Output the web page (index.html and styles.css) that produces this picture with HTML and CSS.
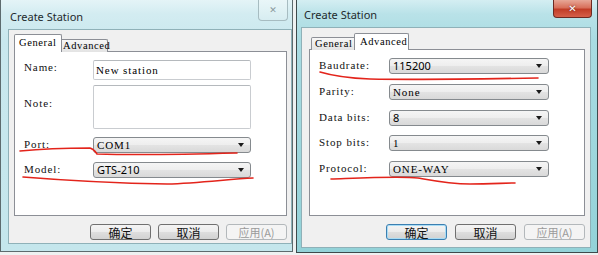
FILE: index.html
```html
<!DOCTYPE html>
<html lang="zh-CN">
<head>
    <meta charset="UTF-8">
    <title>Create Station</title>
    <link rel="stylesheet" href="styles.css">
</head>
<body>
    <div class="screen">
        <div class="dlg dlg-left">
            <div class="titlebar">
                <span class="title">Create Station</span>
                <span class="close">&#x2715;</span>
            </div>
            <div class="client">
                <div class="tabs">
                    <span class="tab on">General</span>
                    <span class="tab">Advanced</span>
                </div>
                <div class="panel">
                    <div class="row r-name">
                        <span class="lbl">Name:</span>
                        <span class="edit mono">New station</span>
                    </div>
                    <div class="row r-note">
                        <span class="lbl note-lbl">Note:</span>
                        <span class="edit memo"></span>
                    </div>
                    <div class="row r-port">
                        <span class="lbl">Port:</span>
                        <span class="combo mono">COM1</span>
                    </div>
                    <div class="row r-model">
                        <span class="lbl">Model:</span>
                        <span class="combo sans">GTS-210</span>
                    </div>
                </div>
                <div class="buttons">
                    <button class="btn">确定</button>
                    <button class="btn">取消</button>
                    <button class="btn off">应用(A)</button>
                </div>
            </div>
        </div>

        <div class="dlg dlg-right">
            <div class="titlebar">
                <span class="title">Create Station</span>
                <span class="close">&#x2715;</span>
            </div>
            <div class="client">
                <div class="tabs">
                    <span class="tab">General</span>
                    <span class="tab on">Advanced</span>
                </div>
                <div class="panel">
                    <div class="row">
                        <span class="lbl">Baudrate:</span>
                        <span class="combo sans">115200</span>
                    </div>
                    <div class="row">
                        <span class="lbl">Parity:</span>
                        <span class="combo mono">None</span>
                    </div>
                    <div class="row">
                        <span class="lbl">Data bits:</span>
                        <span class="combo sans">8</span>
                    </div>
                    <div class="row">
                        <span class="lbl">Stop bits:</span>
                        <span class="combo mono">1</span>
                    </div>
                    <div class="row">
                        <span class="lbl">Protocol:</span>
                        <span class="combo mono">ONE-WAY</span>
                    </div>
                </div>
                <div class="buttons">
                    <button class="btn focus">确定</button>
                    <button class="btn">取消</button>
                    <button class="btn off">应用(A)</button>
                </div>
            </div>
        </div>

        <!-- hand drawn marks over the screenshot -->
        <svg class="marks" width="598" height="255" viewBox="0 0 598 255">
            <path d="M20 151 C40 149 70 148 90 148 C94 149 95 151 97 154 C130 155 200 154 237 153"/>
            <path d="M23 177 C60 180 100 183 167 184 C200 183 230 179 253 178"/>
            <path d="M320 72 C330 75 345 78 370 79 C420 80 480 79 538 78"/>
            <path d="M331 179 C360 178 400 176 418 178 C435 181 450 184 470 184 C490 184 505 183 515 183"/>
        </svg>
    </div>
</body>
</html>
```

FILE: styles.css
```css
body {
    margin: 0;
    background-color: #eef1f1;
    font-family: 'Liberation Serif', 'DejaVu Serif', serif;
    font-size: 11px;
    color: #000;
}
.screen {
    position: relative;
    width: 598px;
    height: 255px;
    display: flex;
    gap: 3px;
    overflow: hidden;
}

/* window frames */
.dlg {
    box-sizing: border-box;
    display: flex;
    flex-direction: column;
}
.dlg-left {
    width: 293px;
    height: 252px;
    border: 1px solid #5d6b6e;
    border-top: none;
    padding: 0 0 7px 7px;
    background: linear-gradient(to bottom, #e4f4f7 0px, #d3ecf1 14px, #c9e8ee 40px, #c4e6ec 100%);
}
.dlg-right {
    width: 302px;
    height: 253px;
    border: 1px solid #3e4a4c;
    border-top: none;
    padding: 0 6px 4px 4px;
    background: linear-gradient(to bottom, #d4eef2 0px, #b9e2e8 14px, #a9dce2 40px, #93d2d8 100%);
}
.titlebar {
    display: flex;
    align-items: flex-start;
    flex: none;
}
.dlg-left .titlebar {
    height: 29px;
}
.dlg-right .titlebar {
    height: 27px;
}
.title {
    font-family: 'Noto Sans', 'Open Sans', sans-serif;
    font-size: 11px;
    color: #1e2a2c;
}
.dlg-left .title {
    margin-top: 9px;
    margin-left: 2px;
}
.dlg-right .title {
    margin-top: 7px;
    margin-left: 3px;
}
.close {
    margin-left: auto;
    display: flex;
    align-items: center;
    justify-content: center;
    font-family: 'DejaVu Sans', sans-serif;
    font-weight: bold;
    box-sizing: border-box;
}
.dlg-left .close {
    width: 30px;
    height: 21px;
    margin-right: 4px;
    border: 1px solid #a7bcc1;
    border-top: none;
    border-radius: 0 0 4px 4px;
    background: linear-gradient(to bottom, #e9f6f8, #d7edf1);
    color: #8a999d;
    font-size: 9px;
}
.dlg-right .close {
    width: 39px;
    height: 18px;
    margin-right: -1px;
    border: 1px solid #6c2a22;
    border-top: none;
    border-radius: 0 0 4px 4px;
    background: linear-gradient(to bottom, #e7a797 0%, #d8705b 45%, #c13d27 55%, #d6604a 100%);
    color: #fff;
    font-size: 10px;
    text-shadow: 0 0 2px #5a1a10;
}

/* client area */
.client {
    box-sizing: border-box;
    background-color: #f0f0f0;
    display: flex;
    flex-direction: column;
    border: 1px solid #8fb1b8;
}
.dlg-left .client {
    height: 215px;
    padding: 4px 4px 0 5px;
}
.dlg-right .client {
    height: 221px;
    padding: 5px 5px 0 7px;
}
.tabs {
    display: flex;
    align-items: flex-end;
    padding-left: 2px;
    position: relative;
    z-index: 1;
    margin-bottom: -1px;
}
.tab {
    box-sizing: border-box;
    height: 13px;
    padding: 0 3px;
    line-height: 12px;
    border: 1px solid #8c8f96;
    border-bottom: none;
    border-radius: 2px 2px 0 0;
    background: linear-gradient(to bottom, #f7f7f7, #e3e3e3);
    font-size: 10.5px;
    letter-spacing: 0.6px;
    white-space: nowrap;
}
.tab + .tab {
    border-left: none;
}
.tab.on {
    height: 18px;
    line-height: 15px;
    margin: 0 -2px;
    padding: 0 4px;
    background: #fff;
    border-left: 1px solid #8c8f96;
    border-right: 1px solid #8c8f96;
    position: relative;
}
.dlg-left .tab.on {
    width: 48px;
}
.dlg-left .tab:not(.on) {
    width: 48px;
    padding-left: 3px;
}
.dlg-right .tab:not(.on) {
    width: 45px;
    padding-left: 3px;
}
.dlg-right .tab.on {
    width: 55px;
    height: 17px;
    padding-left: 5px;
}
.panel {
    box-sizing: border-box;
    background-color: #fff;
    border: 1px solid #8c8f96;
    display: flex;
    flex-direction: column;
}
.dlg-left .panel {
    height: 165px;
    padding: 8px 0 0 9px;
}
.dlg-right .panel {
    height: 167px;
    padding: 8px 0 0 9px;
    gap: 9.75px;
}

/* rows */
.row {
    display: flex;
    align-items: flex-start;
}
.lbl {
    width: 69px;
    flex: none;
    padding-top: 1px;
    letter-spacing: 0.9px;
    color: #111;
}
.dlg-right .lbl {
    width: 70px;
}
.note-lbl {
    padding-top: 12px;
}
.r-note {
    margin-top: 5px;
}
.r-port {
    margin-top: 8px;
}
.r-model {
    margin-top: 9px;
}
.edit {
    box-sizing: border-box;
    width: 158px;
    height: 20px;
    border: 1px solid #c9ccd0;
    border-top-color: #b5b9bd;
    border-radius: 2px;
    background: #fff;
    padding: 3px 0 0 2px;
}
.memo {
    height: 44px;
}
.combo {
    box-sizing: border-box;
    position: relative;
    width: 158px;
    height: 16px;
    line-height: 14px;
    border: 1px solid #858a8e;
    border-radius: 3px;
    background: linear-gradient(to bottom, #f5f5f5 0%, #eeeeee 48%, #e3e3e3 52%, #d9d9d9 100%);
    padding-left: 3px;
}
.dlg-right .combo {
    width: 160px;
}
.combo::after {
    content: "";
    position: absolute;
    right: 6px;
    top: 5px;
    border-left: 3.5px solid transparent;
    border-right: 3.5px solid transparent;
    border-top: 4px solid #1a1a1a;
}
.mono {
    font-family: 'Liberation Serif', serif;
    font-size: 11px;
    letter-spacing: 0.9px;
}
.sans {
    font-family: 'Noto Sans', 'DejaVu Sans', sans-serif;
    font-size: 11px;
}

/* dialog buttons */
.buttons {
    display: flex;
    justify-content: flex-end;
    gap: 7px;
    margin-top: 8px;
}
.dlg-right .buttons {
    gap: 8px;
}
.btn {
    box-sizing: border-box;
    width: 61px;
    height: 16px;
    padding: 0;
    border: 1px solid #707070;
    border-radius: 3px;
    background: linear-gradient(to bottom, #f4f4f4 0%, #ececec 48%, #dedede 52%, #d2d2d2 100%);
    font-family: 'Noto Sans CJK SC', 'Noto Sans', sans-serif;
    font-size: 12px;
    line-height: 13px;
    color: #111;
}
.btn.focus {
    border-color: #3c7fb1;
    box-shadow: inset 0 0 0 1px #a8dcf5;
}
.btn.off {
    border-color: #b3b8bb;
    background: #f4f4f4;
    color: #9a9a9a;
    font-size: 11px;
}

/* red annotations drawn over the capture */
.marks {
    position: absolute;
    left: 0;
    top: 0;
    pointer-events: none;
}
.marks path {
    fill: none;
    stroke: #e3241b;
    stroke-width: 1.6;
    stroke-linecap: round;
}
```
